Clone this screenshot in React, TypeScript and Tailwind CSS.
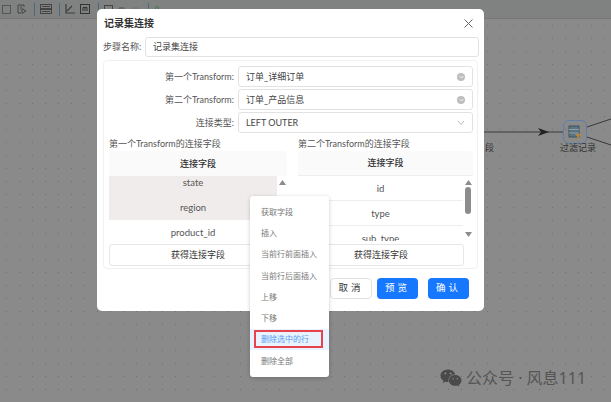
import { FaWeixin } from "react-icons/fa";

const menuItems = ["获取字段", "插入", "当前行前面插入", "当前行后面插入", "上移", "下移", "删除选中的行", "删除全部"];

const Divider = () => <div className="w-px h-[13px] bg-[#4a6a80]" />;

const Toolbar = () => (
  <div className="h-[19px] shrink-0 bg-[#808281] border-b border-[#767877] flex items-center pl-[2px] overflow-hidden">
    <svg width="9" height="9" viewBox="0 0 9 9" fill="none" stroke="#555" className="mr-[6px]">
      <rect x="0.5" y="0.5" width="8" height="8" />
    </svg>
    <svg width="10" height="10" viewBox="0 0 10 10" fill="none" stroke="#444" className="mr-[7px]">
      <path d="M7 3V1H1v8h3M3 3h2M3 5h1M5 4.500l4 2.500-4 2.500z" />
    </svg>
    <Divider />
    <svg width="12" height="10" viewBox="0 0 12 10" fill="none" stroke="#444" className="ml-[5px] mr-[7px]">
      <rect x="0.500" y="0.500" width="11" height="4" />
      <rect x="0.500" y="5.500" width="11" height="4" />
      <path d="M2 2.500h8M2 7.500h8" />
    </svg>
    <Divider />
    <svg width="10" height="10" viewBox="0 0 10 10" fill="none" stroke="#3d3d3d" strokeWidth="1.200" className="ml-[5px] mr-[5px]">
      <path d="M1 0v9h9M2 7l5-5" />
    </svg>
    <svg width="10" height="10" viewBox="0 0 10 10" fill="none" stroke="#333" className="mr-[8px]">
      <rect x="0.500" y="0.500" width="9" height="9" />
      <path d="M3 7V3.500h4V7M5 3.500V7" />
    </svg>
    <Divider />
    <svg width="9" height="8" viewBox="0 0 9 8" fill="none" stroke="#444" className="ml-[5px] mr-[5px]">
      <rect x="0.500" y="0.500" width="8" height="8" />
    </svg>
    <div className="w-[7px] h-[5px] mr-[7px] rounded-full bg-[#666]" />
    <div className="w-[7px] h-[5px] mr-[9px] rounded-full bg-[#777]" />
    <Divider />
    <div className="ml-[6px] w-[4px] h-[6px] border border-[#3f7a4f] rounded-sm" />
  </div>
);

const FlowCanvas = () => (
  <div className="flex-1 relative bg-[#8a8a8a] bg-[radial-gradient(circle,#6e6e6e_0.6px,transparent_0.9px)] bg-[size:13px_13px]">
    <svg width="611" height="383" className="absolute left-0 top-0">
      <path d="M484 113H563" stroke="#3a3a3a" fill="none" />
      <path d="M538 109l11 4-11 4 3-4z" fill="#222" />
      <path d="M587 108L611 100M587 118L611 126" stroke="#3a3a3a" fill="none" />
    </svg>
    <div className="absolute left-[563px] top-[101px] w-[24px] h-[24px] rounded-[6px] border border-[#5f7fa8] flex items-center justify-center">
      <svg width="14" height="15" viewBox="0 0 14 15" fill="none">
        <rect x="1" y="1" width="10" height="11" fill="#5d7480" stroke="#3d5560" />
        <path d="M1 4.500h10M1 8h10" stroke="#8aa0aa" />
        <path d="M7 9h6l-2.300 2.800V14H9.300v-2.200z" fill="#b8892f" />
      </svg>
    </div>
    <div className="absolute left-[485px] top-[122px] text-[9px] leading-[14px] text-[#333]">段</div>
    <div className="absolute left-[560px] top-[122px] text-[9px] leading-[14px] text-[#333] whitespace-nowrap">过滤记录</div>
    <div className="absolute left-[440px] top-[349px] flex items-center text-[#555] whitespace-nowrap font-['Noto_Sans','Noto_Sans_CJK_SC',sans-serif]">
      <FaWeixin className="w-[22px] h-[20px] mr-[4px] text-[#4a4a4a]" />
      <span className="text-[16px] leading-[20px]">公众号 · 风息111</span>
    </div>
  </div>
);

const Field = ({ label, value, icon }: { label: string; value: string; icon: "clear" | "down" }) => (
  <div className="flex items-center h-[21px]">
    <div className="w-[129px] shrink-0 pr-[4px] text-right text-[9px] text-[#555] whitespace-nowrap">{label}:</div>
    <div className="flex-1 h-[21px] border border-[#e2e2e2] rounded-[3px] flex items-center justify-between pl-[7px] pr-[7px] text-[9px] text-[#444]">
      <span>{value}</span>
      {icon === "clear" ? (
        <span className="w-[8px] h-[8px] rounded-full bg-[#bdbdbd] flex items-center justify-center">
          <svg width="5" height="4" viewBox="0 0 5 4" fill="none" stroke="#fff" strokeWidth="0.800">
            <path d="M0.500 1l2 2 2-2" />
          </svg>
        </span>
      ) : (
        <svg width="8" height="6" viewBox="0 0 8 6" fill="none" stroke="#bbb">
          <path d="M1 1l3 3.500L7 1" />
        </svg>
      )}
    </div>
  </div>
);

const Arrow = ({ down }: { down?: boolean }) => (
  <svg width="7" height="5" viewBox="0 0 7 5" fill="#8c8c8c">
    <path d={down ? "M0 0h7L3.500 5z" : "M3.500 0L7 5H0z"} />
  </svg>
);

const LeftTable = () => (
  <div className="w-[178px]">
    <div className="mt-[1px] text-[9px] leading-[14px] text-[#555]">第一个Transform的连接字段</div>
    <div className="h-[25px] bg-[#fafafa] rounded-t-[4px] flex items-center justify-center text-[9px] font-medium text-[#333]">连接字段</div>
    <div className="h-[65px] flex overflow-hidden">
      <div className="w-[168px] text-[9.500px] text-[#555] text-center">
        <div className="h-[19px] bg-[#f1ecec] leading-[14px]">state</div>
        <div className="h-[25px] bg-[#f1ecec] leading-[25px]">region</div>
        <div className="h-[25px] leading-[25px]">product_id</div>
      </div>
      <div className="w-[10px] flex flex-col items-center pt-[4px]">
        <Arrow />
      </div>
    </div>
    <div className="mt-[3px] h-[22px] border border-[#e6e6e6] rounded-[3px] flex items-center justify-center text-[9px] text-[#333]">获得连接字段</div>
  </div>
);

const RightTable = () => (
  <div className="w-[175px]">
    <div className="mt-[1px] text-[9px] leading-[14px] text-[#555]">第二个Transform的连接字段</div>
    <div className="h-[25px] bg-[#fafafa] rounded-t-[4px] border-b border-[#eee] flex items-center justify-center text-[9px] font-medium text-[#333]">连接字段</div>
    <div className="h-[65px] flex overflow-hidden">
      <div className="w-[165px] text-[9.500px] text-[#555] text-center">
        <div className="h-[25px] border-b border-[#eee] leading-[25px]">id</div>
        <div className="h-[25px] border-b border-[#eee] leading-[25px]">type</div>
        <div className="h-[25px] leading-[25px]">sub_type</div>
      </div>
      <div className="w-[10px] flex flex-col items-center pt-[4px]">
        <Arrow />
        <div className="w-[6px] h-[27px] mt-[2px] rounded-[3px] bg-[#8c8c8c]" />
        <div className="mt-[18px]">
          <Arrow down />
        </div>
      </div>
    </div>
    <div className="mt-[3px] w-[166px] h-[22px] border border-[#e6e6e6] rounded-[3px] flex items-center justify-center text-[9px] text-[#333]">获得连接字段</div>
  </div>
);

const Dialog = () => (
  <div className="absolute left-[97px] top-[9px] w-[387px] h-[302px] bg-white rounded-[5px] flex flex-col">
    <div className="h-[28px] shrink-0 flex items-center justify-between pl-[7px] pr-[11px]">
      <span className="text-[10px] font-bold text-[#333]">记录集连接</span>
      <svg width="9" height="9" viewBox="0 0 9 9" stroke="#666" fill="none">
        <path d="M0.500 0.500l8 8M8.500 0.500l-8 8" />
      </svg>
    </div>
    <div className="flex items-center pl-[6px] pr-[5px] h-[20px] shrink-0">
      <div className="w-[42px] text-[9px] text-[#555] whitespace-nowrap">步骤名称:</div>
      <div className="flex-1 h-[20px] border border-[#e2e2e2] rounded-[3px] pl-[7px] flex items-center text-[9px] text-[#444]">记录集连接</div>
    </div>
    <div className="mx-[6px] mt-[3px] h-[209px] border border-[#f1f1f1] rounded-[4px] pt-[5px] pl-[5px] pr-[4px]">
      <div className="flex flex-col gap-[2px]">
        <Field label="第一个Transform" value="订单_详细订单" icon="clear" />
        <Field label="第二个Transform" value="订单_产品信息" icon="clear" />
        <Field label="连接类型" value="LEFT OUTER" icon="down" />
      </div>
      <div className="flex justify-between mt-[3px]">
        <LeftTable />
        <RightTable />
      </div>
    </div>
    <div className="flex-1 flex justify-end items-start pt-[9px] pr-[15px] gap-[5px] text-[9.500px]">
      <div className="w-[42px] h-[21px] border border-[#e2e2e2] rounded-[4px] flex items-center justify-center text-[#333] tracking-[3px]">取消</div>
      <div className="w-[41px] h-[21px] bg-[#1677ff] rounded-[4px] flex items-center justify-center text-white tracking-[3px]">预览</div>
      <div className="ml-[5px] w-[41px] h-[21px] bg-[#1677ff] rounded-[4px] flex items-center justify-center text-white tracking-[3px]">确认</div>
    </div>
  </div>
);

const ContextMenu = () => (
  <div className="absolute left-[250px] top-[196px] w-[79px] h-[181px] bg-white rounded-[3px] pt-[5px] flex flex-col shadow-[0_1px_4px_rgba(0,0,0,0.2)]">
    {menuItems.map((item) =>
      item === "删除选中的行" ? (
        <div key={item} className="h-[21.300px] bg-[#e8f3ff] flex items-center px-[4px] shrink-0">
          <div className="w-[69px] h-[18px] border-2 border-[#e8424a] flex items-center pl-[5px] text-[8px] text-[#5a9bf0] whitespace-nowrap">{item}</div>
        </div>
      ) : (
        <div key={item} className="h-[21.300px] flex items-center pl-[11px] text-[8px] text-[#777] whitespace-nowrap shrink-0">
          {item}
        </div>
      ),
    )}
  </div>
);

export default function App() {
  return (
    <div className="relative w-[611px] h-[402px] overflow-hidden flex flex-col font-['Lato','Noto_Sans_CJK_SC',sans-serif]">
      <Toolbar />
      <FlowCanvas />
      <Dialog />
      <ContextMenu />
    </div>
  );
}
